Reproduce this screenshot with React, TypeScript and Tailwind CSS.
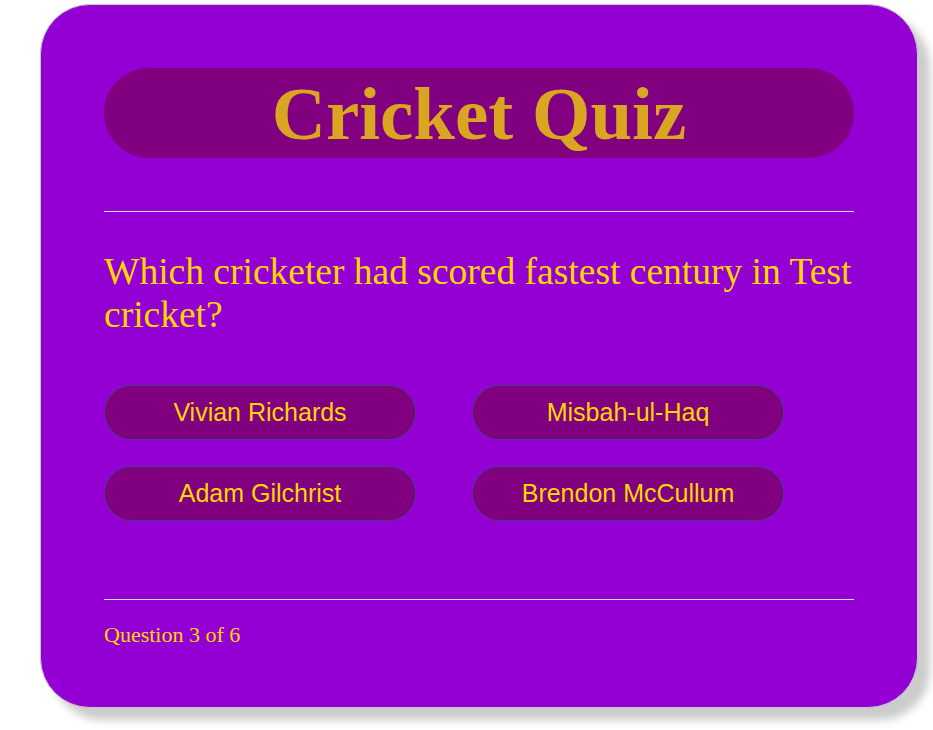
import React from "react";

const options = ["Vivian Richards", "Misbah-ul-Haq", "Adam Gilchrist", "Brendon McCullum"];

export default function App() {
  return (
    <div className="min-h-screen bg-white pl-[40px] pt-[4px]">
      <div className="w-[878px] rounded-[50px] border border-[#c8c8c8] bg-[#9400d3] px-[63px] pt-[63px] pb-[59px] shadow-[12px_12px_8px_#cccccc]">
        <div className="flex h-[90px] items-center justify-center rounded-full bg-[#800080]">
          <h1 className="font-['Liberation_Serif',serif] text-[75px] font-bold leading-none text-[#daa520]">
            Cricket Quiz
          </h1>
        </div>
        <hr className="mt-[53px] border-t border-[#e0e0e0]" />
        <p className="mt-[38px] font-['Liberation_Serif',serif] text-[37.5px] leading-[43px] text-[#ffd700]">
          Which cricketer had scored fastest century in Test cricket?
        </p>
        <div className="mt-[49px] grid w-[680px] grid-cols-[312px_312px] gap-x-[56px] gap-y-[26px]">
          {options.map((o) => (
            <button
              key={o}
              className="h-[55px] rounded-full border border-[#483d8b] bg-[#800080] font-['Liberation_Sans',sans-serif] text-[25px] text-[#ffd700]"
            >
              {o}
            </button>
          ))}
        </div>
        <hr className="mt-[78px] border-t border-[#e0e0e0]" />
        <p className="mt-[22px] font-['Liberation_Serif',serif] text-[22px] leading-[26px] text-[#ffd700]">
          Question 3 of 6
        </p>
      </div>
    </div>
  );
}
